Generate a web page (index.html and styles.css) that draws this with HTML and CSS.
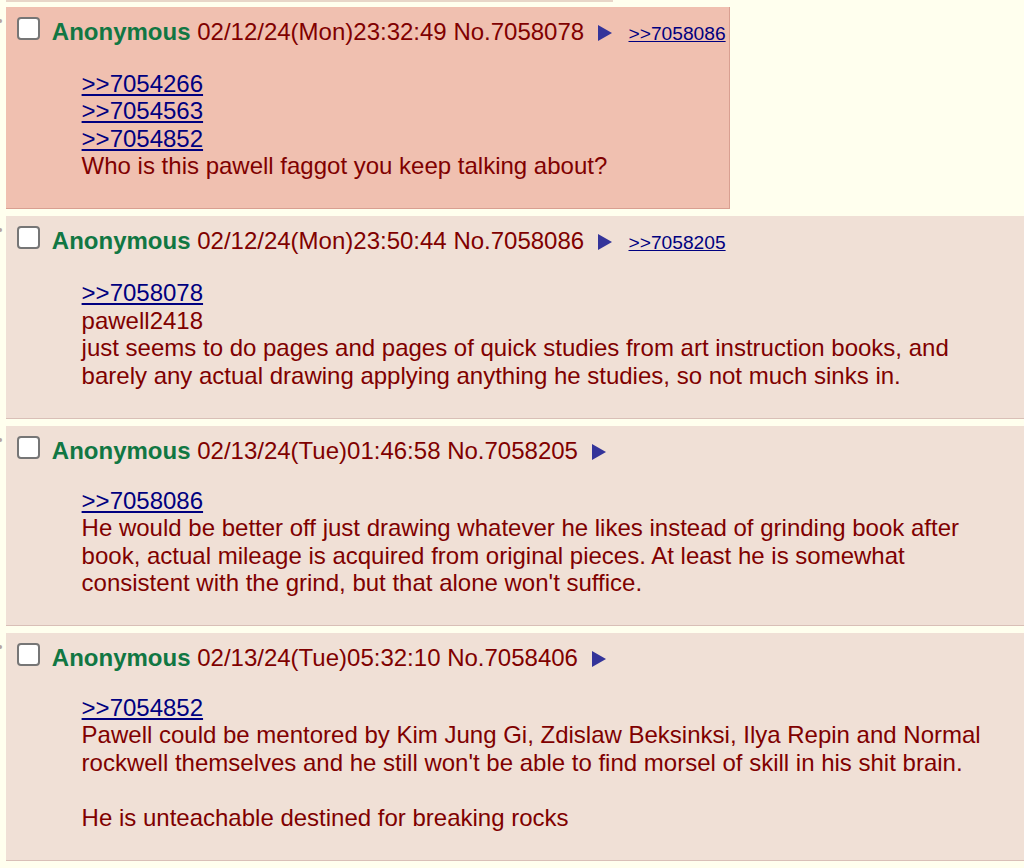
FILE: index.html
```html
<!DOCTYPE html>
<html lang="en">
<head>
<meta charset="utf-8">
<title>Thread</title>
<link rel="stylesheet" href="styles.css">
</head>
<body>
<div class="thread">
  <div class="stub"></div>

  <div class="postContainer">
    <div class="sideArrows">&gt;&gt;</div>
    <div class="post reply highlight">
      <div class="postInfo"><input type="checkbox" class="cb"> <span class="name">Anonymous</span> <span class="dateTime">02/12/24(Mon)23:32:49</span> <span class="postNum">No.7058078</span> <svg class="menuBtn" width="14" height="16" viewBox="0 0 14 16"><polygon points="0,0 14,8 0,16" /></svg> <span class="backlink"><a href="#p7058086" class="quotelink">&gt;&gt;7058086</a></span></div>
      <blockquote class="postMessage"><a href="#p7054266" class="quotelink">&gt;&gt;7054266</a><br><a href="#p7054563" class="quotelink">&gt;&gt;7054563</a><br><a href="#p7054852" class="quotelink">&gt;&gt;7054852</a><br>Who is this pawell faggot you keep talking about?</blockquote>
    </div>
  </div>

  <div class="postContainer">
    <div class="sideArrows">&gt;&gt;</div>
    <div class="post reply">
      <div class="postInfo"><input type="checkbox" class="cb"> <span class="name">Anonymous</span> <span class="dateTime">02/12/24(Mon)23:50:44</span> <span class="postNum">No.7058086</span> <svg class="menuBtn" width="14" height="16" viewBox="0 0 14 16"><polygon points="0,0 14,8 0,16" /></svg> <span class="backlink"><a href="#p7058205" class="quotelink">&gt;&gt;7058205</a></span></div>
      <blockquote class="postMessage"><a href="#p7058078" class="quotelink">&gt;&gt;7058078</a><br>pawell2418<br>just seems to do pages and pages of quick studies from art instruction books, and barely any actual drawing applying anything he studies, so not much sinks in.</blockquote>
    </div>
  </div>

  <div class="postContainer">
    <div class="sideArrows">&gt;&gt;</div>
    <div class="post reply">
      <div class="postInfo"><input type="checkbox" class="cb"> <span class="name">Anonymous</span> <span class="dateTime">02/13/24(Tue)01:46:58</span> <span class="postNum">No.7058205</span> <svg class="menuBtn" width="14" height="16" viewBox="0 0 14 16"><polygon points="0,0 14,8 0,16" /></svg></div>
      <blockquote class="postMessage"><a href="#p7058086" class="quotelink">&gt;&gt;7058086</a><br>He would be better off just drawing whatever he likes instead of grinding book after book, actual mileage is acquired from original pieces. At least he is somewhat consistent with the grind, but that alone won't suffice.</blockquote>
    </div>
  </div>

  <div class="postContainer">
    <div class="sideArrows">&gt;&gt;</div>
    <div class="post reply">
      <div class="postInfo"><input type="checkbox" class="cb"> <span class="name">Anonymous</span> <span class="dateTime">02/13/24(Tue)05:32:10</span> <span class="postNum">No.7058406</span> <svg class="menuBtn" width="14" height="16" viewBox="0 0 14 16"><polygon points="0,0 14,8 0,16" /></svg></div>
      <blockquote class="postMessage"><a href="#p7054852" class="quotelink">&gt;&gt;7054852</a><br>Pawell could be mentored by Kim Jung Gi, Zdislaw Beksinksi, Ilya Repin and Normal rockwell themselves and he still won't be able to find morsel of skill in his shit brain.<br><br>He is unteachable destined for breaking rocks</blockquote>
    </div>
  </div>
</div>
</body>
</html>
```

FILE: styles.css
```css
html, body {
  margin: 0;
  padding: 0;
  background: #FFFFEE;
  overflow: hidden;
}

body {
  font-family: "Liberation Sans", Arial, sans-serif;
  font-size: 24px;
  color: #800000;
}

.thread {
  width: 1082px;
}

.stub {
  width: 607px;
  height: 2px;
  background: #E8D6C8;
  margin-left: 6px;
  margin-bottom: 5px;
}

.postContainer {
  display: flex;
  align-items: flex-start;
  margin-bottom: 7.3px;
}

.sideArrows {
  width: 3px;
  margin-right: 3px;
  display: flex;
  justify-content: flex-end;
  color: #B8A49C;
  font-size: 24px;
  line-height: 27.6px;
  padding-top: 0;
  white-space: nowrap;
}

.post {
  min-width: 0;
  padding: 3.6px;
  border-right: 1.8px solid #D9BFB7;
  border-bottom: 1.8px solid #D9BFB7;
}

.reply {
  background: #F0E0D6;
}

.reply.highlight {
  background: #F0C0B0;
  border-right-color: #D99F91;
  border-bottom-color: #D99F91;
}

.postInfo {
  line-height: 27.6px;
  padding-top: 6px;
  white-space: nowrap;
}

.cb {
  appearance: none;
  -webkit-appearance: none;
  width: 23.4px;
  height: 23.4px;
  margin: 0 5px 0 7.2px;
  border: 2px solid #767676;
  border-radius: 4px;
  background: #FFFFFF;
  vertical-align: baseline;
  box-sizing: border-box;
}

.name {
  color: #117743;
  font-weight: bold;
}

.menuBtn {
  fill: #34349A;
  margin-left: 7px;
  margin-right: 10px;
  vertical-align: -1px;
}

.backlink {
  font-size: 19.2px;
}

a.quotelink {
  color: #000080;
  text-decoration: underline;
}

.postMessage {
  margin: 22px 72px 25px;
  line-height: 27.5px;
}
```
